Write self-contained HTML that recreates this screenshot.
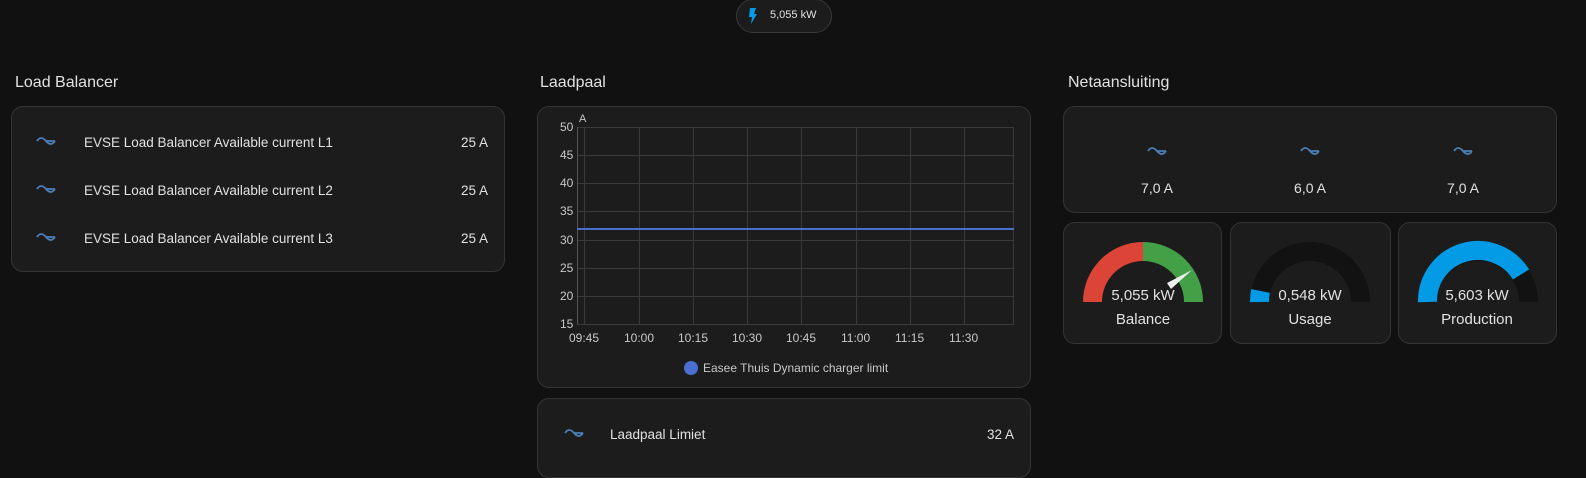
<!DOCTYPE html>
<html><head><meta charset="utf-8"><style>
*{box-sizing:border-box;margin:0;padding:0}
body{width:1586px;height:470px;background:#111111;font-family:"Liberation Sans",sans-serif;color:#e1e1e1;position:relative;overflow:hidden}
.card{position:absolute;background:#1c1c1c;border:1px solid #343434;border-radius:12px}
.h{position:absolute;font-size:16px;color:#e1e1e1}
.row{position:absolute;left:0;right:0;height:20px;font-size:13.5px}
.row .ic{position:absolute;left:24px;top:3px}
.row .n{position:absolute;left:72px;top:2px}
.row .v{position:absolute;right:16px;top:2px}
.ax{position:absolute;font-size:12px;color:#c8c8c8;z-index:3}
.c{position:absolute;text-align:center;font-size:14px;z-index:3}
.top{position:absolute;z-index:2}
</style></head><body>
<svg width="0" height="0" style="position:absolute"><defs>
<symbol id="w" viewBox="0 0 20 10"><path d="M1 5 Q5 -1 10 5 Q15 11 19 5 M10 5 H19" fill="none" stroke="#4a7fb5" stroke-width="1.8"/></symbol></defs></svg>

<div style="position:absolute;left:736px;top:-1px;width:96px;height:34px;border:1px solid #3a3a3a;border-radius:17px;background:#1c1c1c"></div>
<svg style="position:absolute;left:748px;top:8px" width="10" height="16" viewBox="0 0 10 16"><path d="M2 0 H8 L6 6 H9 L3 16 L4 9 H1 Z" fill="#039be5"/></svg>
<div style="position:absolute;left:770px;top:9px;font-size:11px;color:#e1e1e1">5,055 kW</div>

<div class="h" style="left:15px;top:74px">Load Balancer</div>
<div class="h" style="left:540px;top:74px">Laadpaal</div>
<div class="h" style="left:1068px;top:74px">Netaansluiting</div>

<div class="card" style="left:11px;top:106px;width:494px;height:166px">
 <div class="row" style="top:26px"><svg class="ic" width="20" height="10"><use href="#w"/></svg><span class="n">EVSE Load Balancer Available current L1</span><span class="v">25 A</span></div>
 <div class="row" style="top:74px"><svg class="ic" width="20" height="10"><use href="#w"/></svg><span class="n">EVSE Load Balancer Available current L2</span><span class="v">25 A</span></div>
 <div class="row" style="top:122px"><svg class="ic" width="20" height="10"><use href="#w"/></svg><span class="n">EVSE Load Balancer Available current L3</span><span class="v">25 A</span></div>
</div>

<div class="card" style="left:537px;top:106px;width:494px;height:282px"></div>

<div class="card" style="left:537px;top:398px;width:494px;height:80px">
 <div class="row" style="top:26px"><svg class="ic" width="20" height="10" style="left:26px"><use href="#w"/></svg><span class="n">Laadpaal Limiet</span><span class="v">32 A</span></div>
</div>

<div class="card" style="left:1063px;top:106px;width:494px;height:107px"></div>
<div class="card" style="left:1063px;top:222px;width:159px;height:122px"></div>
<div class="card" style="left:1230px;top:222px;width:161px;height:122px"></div>
<div class="card" style="left:1398px;top:222px;width:159px;height:122px"></div>

<svg class="top" style="left:0;top:0" width="1586" height="470">
<g stroke="#3a3a3a" stroke-width="1">
<line x1="577" y1="127.5" x2="1014" y2="127.5"/><line x1="577" y1="155.5" x2="1014" y2="155.5"/><line x1="577" y1="183.5" x2="1014" y2="183.5"/><line x1="577" y1="211.5" x2="1014" y2="211.5"/><line x1="577" y1="240.5" x2="1014" y2="240.5"/><line x1="577" y1="268.5" x2="1014" y2="268.5"/><line x1="577" y1="296.5" x2="1014" y2="296.5"/><line x1="577" y1="324.5" x2="1014" y2="324.5"/>
<line x1="584.5" y1="127" x2="584.5" y2="324"/><line x1="639.5" y1="127" x2="639.5" y2="324"/><line x1="693.5" y1="127" x2="693.5" y2="324"/><line x1="747.5" y1="127" x2="747.5" y2="324"/><line x1="801.5" y1="127" x2="801.5" y2="324"/><line x1="856.5" y1="127" x2="856.5" y2="324"/><line x1="910.5" y1="127" x2="910.5" y2="324"/><line x1="964.5" y1="127" x2="964.5" y2="324"/><line x1="1013.5" y1="127" x2="1013.5" y2="324"/>
</g>
<line x1="577.5" y1="127" x2="577.5" y2="324" stroke="#555"/>
<line x1="577" y1="229" x2="1014" y2="229" stroke="#4a6fd0" stroke-width="2"/>
<circle cx="691" cy="368" r="7" fill="#4a6fd0"/>
<g fill="none" stroke-width="19">
<path d="M1092.5 302 A50.5 50.5 0 0 1 1143 251.5" stroke="#db4437"/>
<path d="M1143 251.5 A50.5 50.5 0 0 1 1193.5 302" stroke="#43a047"/>
<path d="M1259.5 302 A50.5 50.5 0 0 1 1360.5 302" stroke="#121212"/>
<path d="M1259.5 302 A50.5 50.5 0 0 1 1260.5 291" stroke="#039be5"/>
<path d="M1427.5 302 A50.5 50.5 0 0 1 1528.5 302" stroke="#121212"/>
<path d="M1427.5 302 A50.5 50.5 0 0 1 1521 274.5" stroke="#039be5"/>
</g>
<path d="M1167 283 L1192 270 L1171 289 Z" fill="#eee"/>
<g transform="translate(1147,146)"><use href="#w" width="20" height="10"/></g>
<g transform="translate(1300,146)"><use href="#w" width="20" height="10"/></g>
<g transform="translate(1453,146)"><use href="#w" width="20" height="10"/></g>
</svg>
<div class="ax" style="left:560px;top:120px">50</div><div class="ax" style="left:560px;top:148px">45</div><div class="ax" style="left:560px;top:176px">40</div><div class="ax" style="left:560px;top:204px">35</div><div class="ax" style="left:560px;top:233px">30</div><div class="ax" style="left:560px;top:261px">25</div><div class="ax" style="left:560px;top:289px">20</div><div class="ax" style="left:560px;top:317px">15</div>
<div class="ax" style="left:579px;top:113px;font-size:11px">A</div>
<div class="ax" style="left:569px;top:331px">09:45</div><div class="ax" style="left:624px;top:331px">10:00</div><div class="ax" style="left:678px;top:331px">10:15</div><div class="ax" style="left:732px;top:331px">10:30</div><div class="ax" style="left:786px;top:331px">10:45</div><div class="ax" style="left:841px;top:331px">11:00</div><div class="ax" style="left:895px;top:331px">11:15</div><div class="ax" style="left:949px;top:331px">11:30</div>
<div class="ax" style="left:703px;top:361px">Easee Thuis Dynamic charger limit</div>

<div class="c" style="left:1117px;top:180px;width:80px">7,0 A</div>
<div class="c" style="left:1270px;top:180px;width:80px">6,0 A</div>
<div class="c" style="left:1423px;top:180px;width:80px">7,0 A</div>
<div class="c" style="left:1093px;top:287px;width:100px;font-size:15px">5,055 kW</div>
<div class="c" style="left:1093px;top:311px;width:100px;font-size:15px">Balance</div>
<div class="c" style="left:1260px;top:287px;width:100px;font-size:15px">0,548 kW</div>
<div class="c" style="left:1260px;top:311px;width:100px;font-size:15px">Usage</div>
<div class="c" style="left:1427px;top:287px;width:100px;font-size:15px">5,603 kW</div>
<div class="c" style="left:1427px;top:311px;width:100px;font-size:15px">Production</div>
</body></html>
